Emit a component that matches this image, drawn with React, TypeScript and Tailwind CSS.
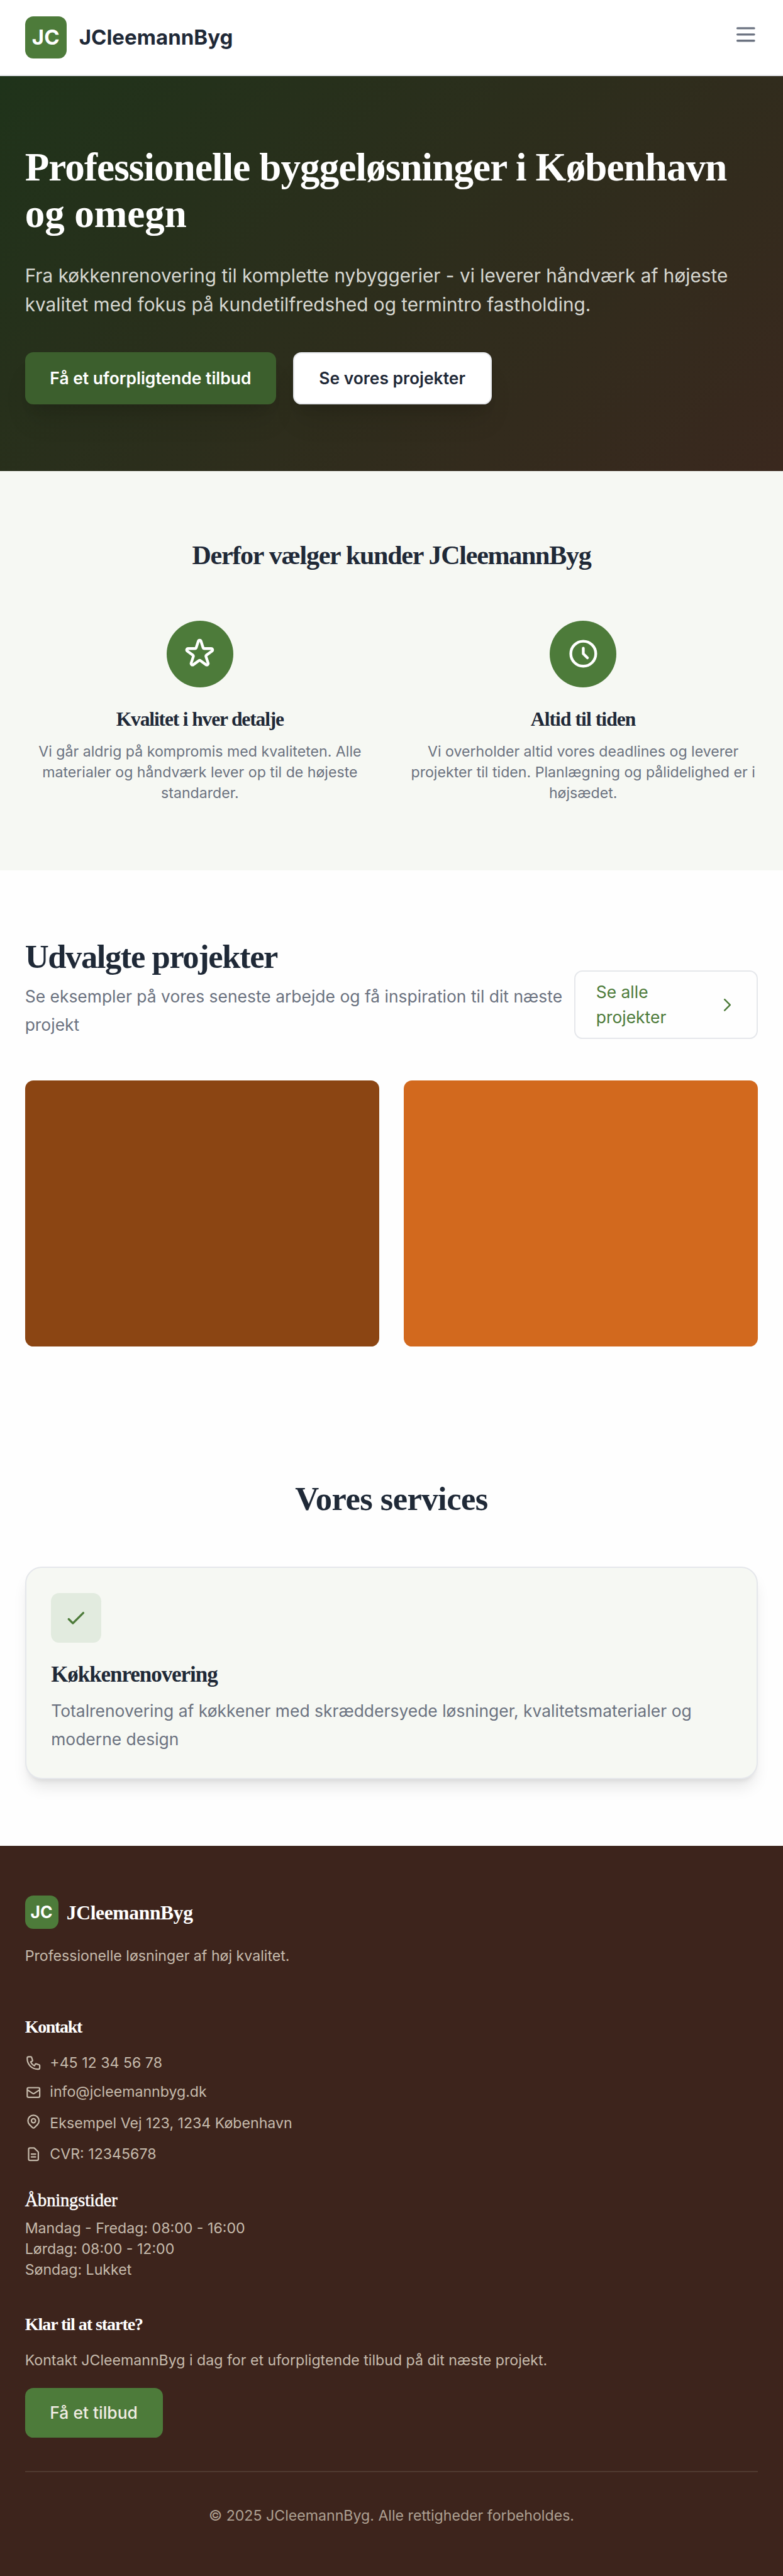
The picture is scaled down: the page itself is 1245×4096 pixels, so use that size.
import type { ReactNode } from "react";
import {
  HiOutlineCheck,
  HiOutlineChevronRight,
  HiOutlineClock,
  HiOutlineDocumentText,
  HiOutlineLocationMarker,
  HiOutlineMail,
  HiOutlineMenu,
  HiOutlinePhone,
  HiOutlineStar,
} from "react-icons/hi";

function Header() {
  return (
    <header className="flex h-[120.7px] items-start justify-between border-b-2 border-[#e5e7eb] bg-white px-[39.68px] pt-[26.45px]">
      <div className="flex items-center gap-[19.84px]">
        <div className="flex size-[66.14px] items-center justify-center rounded-[13.2px] bg-[#4d7b3a] text-[33.07px] font-bold text-white">
          JC
        </div>
        <span className="text-[33.07px] leading-none font-bold text-[#1f2937]">JCleemannByg</span>
      </div>
      <button aria-label="Menu" className="mt-[8.3px] text-[#6b7280]">
        <HiOutlineMenu className="size-[39.68px]" />
      </button>
    </header>
  );
}

function Hero() {
  return (
    <section className="h-[628.3px] bg-[linear-gradient(135deg,#1f331a,#3a281e)] px-[39.68px] pt-[105.8px]">
      <h1 className="pt-[2.4px] font-['Liberation_Serif',serif] text-[63.1px] leading-[74.4px] font-bold text-white">
        <span className="block tracking-[-0.9px] whitespace-nowrap">Professionelle byggeløsninger i København</span>
        <span className="block tracking-[-0.08px]">og omegn</span>
      </h1>
      <p className="mt-[37.3px] text-[29.76px] leading-[46.3px] text-[#d6d7d1]">
        Fra køkkenrenovering til komplette nybyggerier - vi leverer håndværk af højeste
        <br />
        kvalitet med fokus på kundetilfredshed og termintro fastholding.
      </p>
      <div className="mt-[52.9px] flex h-[82.7px] gap-[26.45px] text-[26.45px] font-semibold">
        <button className="rounded-[13.2px] bg-[#3c5f2d] px-[39.68px] text-white shadow-[0_33px_41.3px_-8.3px_rgba(0,0,0,0.1),0_13.2px_16.5px_-9.9px_rgba(0,0,0,0.1)]">
          Få et uforpligtende tilbud
        </button>
        <button className="rounded-[13.2px] border-2 border-[#e5e7eb] bg-white px-[39.68px] text-[#1f2937] shadow-[0_33px_41.3px_-8.3px_rgba(0,0,0,0.1),0_13.2px_16.5px_-9.9px_rgba(0,0,0,0.1)]">
          Se vores projekter
        </button>
      </div>
    </section>
  );
}

function Feature({ icon, title, children }: { icon: ReactNode; title: ReactNode; children: ReactNode }) {
  return (
    <div className="flex flex-col items-center text-center">
      <div className="flex size-[105.8px] items-center justify-center rounded-full bg-[#4d7b3a] text-white">{icon}</div>
      <h3 className="mt-[28.1px] font-['Liberation_Serif',serif] text-[31.55px] leading-[46.3px] font-bold text-[#1f2937]">
        {title}
      </h3>
      <p className="mt-[11.6px] text-[23.15px] leading-[33.07px] text-[#6b7280]">{children}</p>
    </div>
  );
}

function Features() {
  return (
    <section className="h-[634.9px] bg-[#f6f8f3] px-[39.68px] pt-[105.8px]">
      <h2 className="pt-[1.8px] text-center font-['Liberation_Serif',serif] text-[42.06px] leading-[52.9px] font-bold tracking-[-1.28px] text-[#1f2937]">
        Derfor vælger kunder JCleemannByg
      </h2>
      <div className="mt-[77.5px] grid grid-cols-2 gap-[52.9px]">
        <Feature
          icon={<HiOutlineStar className="size-[52.9px]" />}
          title={<span className="tracking-[-1.16px]">Kvalitet i hver detalje</span>}
        >
          Vi går aldrig på kompromis med kvaliteten. Alle
          <br />
          materialer og håndværk lever op til de højeste
          <br />
          standarder.
        </Feature>
        <Feature
          icon={<HiOutlineClock className="size-[52.9px]" />}
          title={<span className="tracking-[-0.92px]">Altid til tiden</span>}
        >
          Vi overholder altid vores deadlines og leverer
          <br />
          projekter til tiden. Planlægning og pålidelighed er i
          <br />
          højsædet.
        </Feature>
      </div>
    </section>
  );
}

function Projects() {
  return (
    <section className="h-[862.6px] px-[39.68px] pt-[105.8px]">
      <div className="flex items-end justify-between">
        <div>
          <h2 className="pt-[1.9px] font-['Liberation_Serif',serif] text-[52.58px] leading-[59.5px] font-bold tracking-[-1.42px] text-[#1f2937]">
            Udvalgte projekter
          </h2>
          <p className="mt-[11.3px] text-[26.45px] leading-[44.97px] text-[#6b7280]">
            Se eksempler på vores seneste arbejde og få inspiration til dit næste
            <br />
            projekt
          </p>
        </div>
        <a className="flex h-[109.1px] w-[292.7px] shrink-0 items-center justify-between rounded-[13.2px] border-2 border-[#e5e7eb] px-[33.07px] text-[26.45px] leading-[39.68px] text-[#4d7b3a]">
          <span>
            Se alle
            <br />
            projekter
          </span>
          <HiOutlineChevronRight className="size-[29.76px]" />
        </a>
      </div>
      <div className="mt-[66.1px] grid grid-cols-2 gap-[39.68px]">
        <div className="aspect-[4/3] rounded-[13.2px] bg-[#8b4513]" />
        <div className="aspect-[4/3] rounded-[13.2px] bg-[#d2691e]" />
      </div>
    </section>
  );
}

function Services() {
  return (
    <section className="h-[688.5px] px-[39.68px] pt-[105.8px]">
      <h2 className="pt-[1.9px] text-center font-['Liberation_Serif',serif] text-[52.58px] leading-[59.5px] font-bold tracking-[-0.53px] text-[#1f2937]">
        Vores services
      </h2>
      <article className="mt-[77.5px] h-[338px] rounded-[26.45px] border-2 border-[#e5e7eb] bg-[#f6f8f3] p-[39.5px] shadow-[0_16.5px_24.8px_-5px_rgba(0,0,0,0.1),0_6.6px_9.9px_-6.6px_rgba(0,0,0,0.1)]">
        <div className="flex size-[79.4px] items-center justify-center rounded-[13.2px] bg-[#e2ebdf] text-[#4d7b3a]">
          <HiOutlineCheck className="size-[39.68px]" />
        </div>
        <h3 className="mt-[28.4px] font-['Liberation_Serif',serif] text-[35.05px] leading-[46.3px] font-bold tracking-[-1.08px] text-[#1f2937]">
          Køkkenrenovering
        </h3>
        <p className="mt-[11.3px] text-[26.45px] leading-[44.97px] text-[#6b7280]">
          Totalrenovering af køkkener med skræddersyede løsninger, kvalitetsmaterialer og
          <br />
          moderne design
        </p>
      </article>
    </section>
  );
}

function Footer() {
  return (
    <footer className="h-[1162px] bg-[#3d241c] px-[39.68px] pt-[79.4px] text-[23.15px] leading-[33.07px] text-[#c6bbac]">
      <div className="flex items-center gap-[13.23px] text-white">
        <div className="flex size-[52.9px] items-center justify-center rounded-[13.2px] bg-[#4d7b3a] text-[26.45px] font-bold">
          JC
        </div>
        <span className="pt-[2px] font-['Liberation_Serif',serif] text-[31.55px] font-bold tracking-[-0.35px]">
          JCleemannByg
        </span>
      </div>
      <p className="mt-[26.45px]">Professionelle løsninger af høj kvalitet.</p>

      <h4 className="mt-[72.9px] font-['Liberation_Serif',serif] text-[28.04px] leading-[45px] font-bold tracking-[-1.34px] text-white">
        Kontakt
      </h4>
      <ul className="mt-[19.4px] flex flex-col gap-[13.23px]">
        <li className="flex items-center gap-[13.23px]">
          <HiOutlinePhone className="size-[26.45px]" />
          +45 12 34 56 78
        </li>
        <li className="flex items-center gap-[13.23px]">
          <HiOutlineMail className="size-[26.45px]" />
          info@jcleemannbyg.dk
        </li>
        <li className="flex items-start gap-[13.23px] leading-[39.35px]">
          <HiOutlineLocationMarker className="mt-[3.3px] size-[26.45px]" />
          Eksempel Vej 123, 1234 København
        </li>
        <li className="flex items-center gap-[13.23px]">
          <HiOutlineDocumentText className="size-[26.45px]" />
          CVR: 12345678
        </li>
      </ul>

      <h4 className="mt-[33.4px] font-['Liberation_Serif',serif] text-[28.5px] leading-[45px] tracking-[-0.16px] text-white [-webkit-text-stroke:0.5px_white]">
        Åbningstider
      </h4>
      <p className="mt-[6.3px]">
        Mandag - Fredag: 08:00 - 16:00
        <br />
        Lørdag: 08:00 - 12:00
        <br />
        Søndag: Lukket
      </p>

      <h4 className="mt-[47.1px] font-['Liberation_Serif',serif] text-[28.04px] leading-[45px] font-bold tracking-[-1.05px] text-white">
        Klar til at starte?
      </h4>
      <p className="mt-[19.3px]">Kontakt JCleemannByg i dag for et uforpligtende tilbud på dit næste projekt.</p>
      <button className="mt-[26.45px] block h-[79.4px] rounded-[13.2px] bg-[#4d7b3a] px-[39.68px] text-[26.45px] font-medium text-[#f0ece2]">
        Få et tilbud
      </button>

      <div className="mt-[52.5px] border-t-2 border-[#503a30] pt-[52.9px] text-center text-[#ada092]">
        © 2025 JCleemannByg. Alle rettigheder forbeholdes.
      </div>
    </footer>
  );
}

export default function App() {
  return (
    <div className="h-[4096px] w-[1245px] overflow-hidden bg-[#fefefe] font-['Inter',sans-serif]">
      <Header />
      <Hero />
      <Features />
      <Projects />
      <Services />
      <Footer />
    </div>
  );
}
